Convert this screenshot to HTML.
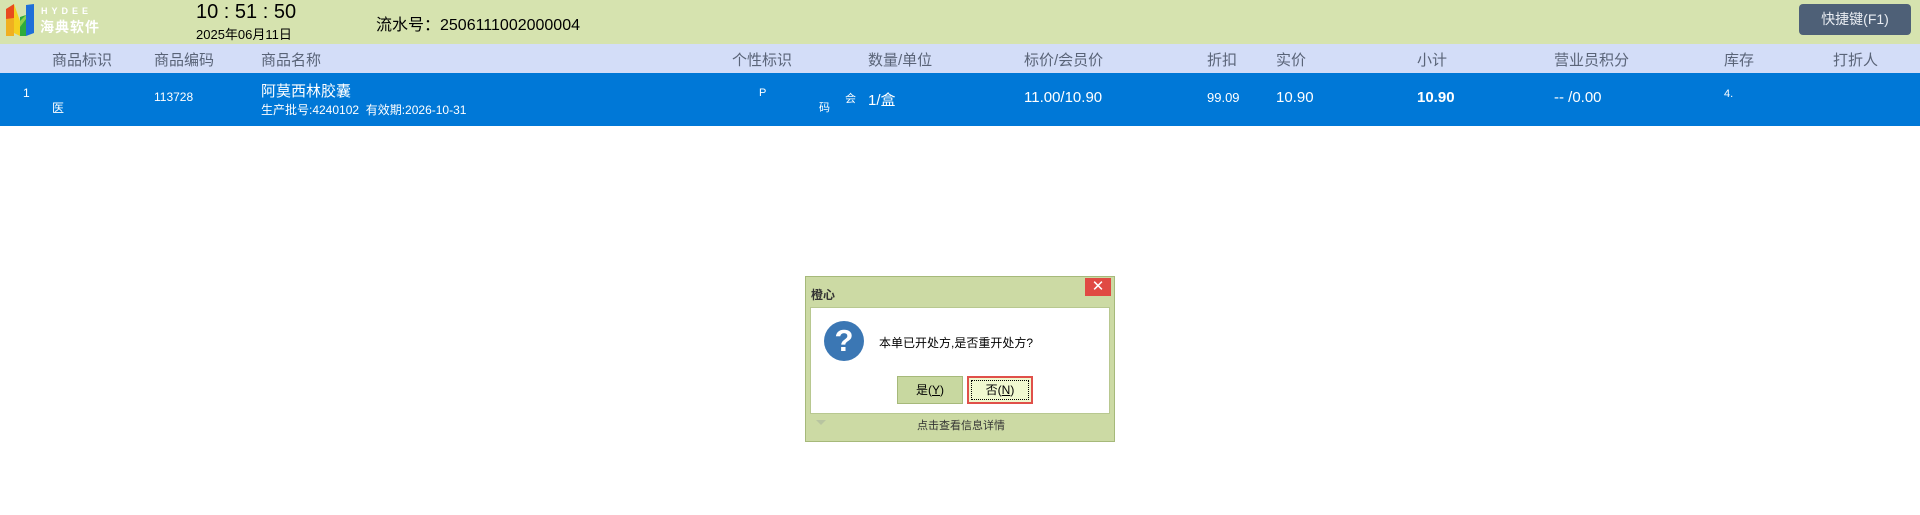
<!DOCTYPE html>
<html><head><meta charset="utf-8"><style>
*{margin:0;padding:0;box-sizing:border-box}
body{width:1920px;height:515px;background:#fff;position:relative;overflow:hidden;font-family:"Liberation Sans","Noto Sans CJK SC",sans-serif}
.a{position:absolute;white-space:nowrap}
#top{position:absolute;left:0;top:0;width:1920px;height:44px;background:#d6e3af}
#hd{position:absolute;left:0;top:44px;width:1920px;height:29px;background:#d3ddf8;color:#5a6478;font-size:15px}
#hd .a{top:5px}
#row{position:absolute;left:0;top:73px;width:1920px;height:53px;background:#0078d7;color:#fff}
</style></head><body>
<div id="top">
 <svg class="a" style="left:5px;top:3px" width="30" height="34" viewBox="0 0 30 34">
  <polygon points="1,6 9,1 9,30 1,33" fill="#e84a1e"/>
  <polygon points="1,16 9,15 9,33 1,33" fill="#f0b020"/>
  <polygon points="9,1 15,18 15,33 9,30" fill="#f5d020"/>
  <polygon points="21,2 29,1 29,30 21,33" fill="#1e6fd8"/>
  <polygon points="15,14 21,12 21,33 15,33" fill="#2eab3c"/>
  <polygon points="15,18 21,12 21,16 15,24" fill="#8bd04a"/>
 </svg>
 <div class="a" style="left:41px;top:6px;font-size:9px;color:#fff;letter-spacing:4px;font-weight:bold">HYDEE</div>
 <div class="a" style="left:40px;top:17px;font-size:14px;color:#fff;font-weight:bold;letter-spacing:1px">海典软件</div>
 <div class="a" style="left:196px;top:1px;font-size:20px;color:#000">10 : 51 : 50</div>
 <div class="a" style="left:196px;top:24px;font-size:13px;color:#000">2025年06月11日</div>
 <div class="a" style="left:376px;top:11px;font-size:16px;color:#000">流水号：2506111002000004</div>
 <div class="a" style="left:1799px;top:4px;width:112px;height:31px;background:#4e6077;border-radius:4px;color:#e8ecf2;font-size:14px;line-height:31px;text-align:center">快捷键(F1)</div>
</div>
<div id="hd">
 <div class="a" style="left:52px">商品标识</div>
 <div class="a" style="left:154px">商品编码</div>
 <div class="a" style="left:261px">商品名称</div>
 <div class="a" style="left:732px">个性标识</div>
 <div class="a" style="left:868px">数量/单位</div>
 <div class="a" style="left:1024px">标价/会员价</div>
 <div class="a" style="left:1207px">折扣</div>
 <div class="a" style="left:1276px">实价</div>
 <div class="a" style="left:1417px">小计</div>
 <div class="a" style="left:1554px">营业员积分</div>
 <div class="a" style="left:1724px">库存</div>
 <div class="a" style="left:1833px">打折人</div>
</div>
<div id="row">
 <div class="a" style="left:23px;top:13px;font-size:12px">1</div>
 <div class="a" style="left:52px;top:26px;font-size:12px">医</div>
 <div class="a" style="left:154px;top:17px;font-size:12px">113728</div>
 <div class="a" style="left:261px;top:7px;font-size:15px">阿莫西林胶囊</div>
 <div class="a" style="left:261px;top:28px;font-size:12px">生产批号:4240102 &nbsp;有效期:2026-10-31</div>
 <div class="a" style="left:759px;top:14px;font-size:11px">P</div>
 <div class="a" style="left:819px;top:26px;font-size:11px">码</div>
 <div class="a" style="left:845px;top:17px;font-size:11px">会</div>
 <div class="a" style="left:868px;top:16px;font-size:15px">1/盒</div>
 <div class="a" style="left:1024px;top:16px;font-size:15px">11.00/10.90</div>
 <div class="a" style="left:1207px;top:17px;font-size:13px">99.09</div>
 <div class="a" style="left:1276px;top:16px;font-size:15px">10.90</div>
 <div class="a" style="left:1417px;top:16px;font-size:15px;font-weight:bold">10.90</div>
 <div class="a" style="left:1554px;top:16px;font-size:15px">-- /0.00</div>
 <div class="a" style="left:1724px;top:15px;font-size:11px">4.</div>
</div>
<div class="a" style="left:805px;top:276px;width:310px;height:166px;background:#ccdaa4;border:1px solid #a6b97a">
 <div class="a" style="left:5px;top:9px;font-size:12px;font-weight:bold;color:#333">橙心</div>
 <div class="a" style="left:279px;top:1px;width:26px;height:18px;background:#e04a43;color:#fff;text-align:center;font-size:15px;line-height:18px">✕</div>
 <div class="a" style="left:4px;top:30px;width:300px;height:107px;background:#fff;border:1px solid #b8c890">
  <div class="a" style="left:13px;top:13px;width:40px;height:40px;border-radius:50%;background:#3b77b4;color:#fff;font-size:31px;font-weight:bold;text-align:center;line-height:40px">?</div>
  <div class="a" style="left:68px;top:26px;font-size:12px;color:#000">本单已开处方,是否重开处方?</div>
  <div class="a" style="left:86px;top:68px;width:66px;height:28px;background:#c8d8a0;border:1px solid #a6b97a;font-size:12px;text-align:center;line-height:26px">是(<u>Y</u>)</div>
  <div class="a" style="left:156px;top:68px;width:66px;height:28px;background:#f0f8d0;border:2px solid #e0504a;outline:1px dotted #000;outline-offset:-5px;font-size:12px;text-align:center;line-height:24px">否(<u>N</u>)</div>
 </div>
 <div class="a" style="left:10px;top:143px;width:0;height:0;border-left:5px solid transparent;border-right:5px solid transparent;border-top:5px solid #b8c4a0"></div>
 <div class="a" style="left:0;top:140px;width:310px;text-align:center;font-size:11px;color:#333">点击查看信息详情</div>
</div>
</body></html>
